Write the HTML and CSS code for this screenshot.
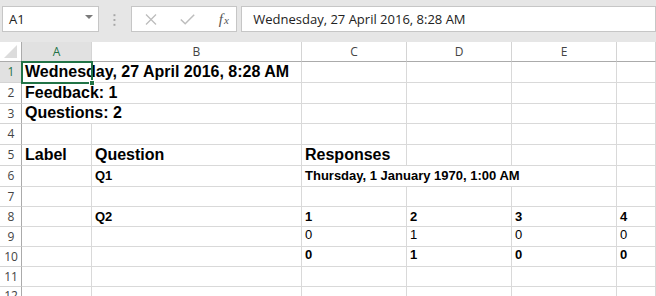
FILE: index.html
```html
<!DOCTYPE html>
<html>
<head>
<meta charset="utf-8">
<link rel="stylesheet" href="styles.css">
</head>
<body>
<div class="app">
  <div class="toolbar">
    <div class="namebox">
      <span class="nb-text">A1</span>
      <svg class="nb-caret" width="8" height="5" viewBox="0 0 8 5"><polygon points="0,0 8,0 4,4" fill="#7a7a7a"/></svg>
    </div>
    <svg class="dots" width="3" height="12" viewBox="0 0 3 12"><rect x="0.5" y="0" width="2" height="2" fill="#a6a6a6"/><rect x="0.5" y="5" width="2" height="2" fill="#a6a6a6"/><rect x="0.5" y="10" width="2" height="2" fill="#a6a6a6"/></svg>
    <div class="fxbox">
      <svg class="ic-x" width="12" height="11" viewBox="0 0 12 11"><path d="M1 0.5 L11 10.5 M11 0.5 L1 10.5" stroke="#bdbdbd" stroke-width="1.3" fill="none"/></svg>
      <svg class="ic-ok" width="15" height="11" viewBox="0 0 15 11"><path d="M0.8 5.5 L5.2 9.8 L14.2 0.8" stroke="#bdbdbd" stroke-width="1.5" fill="none"/></svg>
      <span class="ic-fx"><span class="fx-f">f</span><span class="fx-x">x</span></span>
    </div>
    <div class="formula">Wednesday, 27 April 2016, 8:28 AM</div>
  </div>

  <div class="sheet">
    <!-- header row -->
    <div class="corner"><svg width="21" height="19" viewBox="0 0 21 19"><polygon points="17,3 17,16 4,16" fill="#dcdcdc"/></svg></div>
    <div class="ch ch-sel">A</div>
    <div class="ch">B</div>
    <div class="ch">C</div>
    <div class="ch">D</div>
    <div class="ch">E</div>
    <div class="ch"></div>

    <!-- row 1 -->
    <div class="rh rh-sel">1</div>
    <div class="c big span2 a1">Wednesday, 27 April 2016, 8:28 AM<div class="sel"><div class="handle"></div></div></div>
    <div class="c"></div><div class="c"></div><div class="c"></div><div class="c"></div>

    <!-- row 2 -->
    <div class="rh">2</div>
    <div class="c big span2">Feedback: 1</div>
    <div class="c"></div><div class="c"></div><div class="c"></div><div class="c"></div>

    <!-- row 3 -->
    <div class="rh">3</div>
    <div class="c big span2">Questions: 2</div>
    <div class="c"></div><div class="c"></div><div class="c"></div><div class="c"></div>

    <!-- row 4 -->
    <div class="rh">4</div>
    <div class="c"></div><div class="c"></div><div class="c"></div><div class="c"></div><div class="c"></div><div class="c"></div>

    <!-- row 5 -->
    <div class="rh">5</div>
    <div class="c big">Label</div>
    <div class="c big">Question</div>
    <div class="c big">Responses</div>
    <div class="c"></div><div class="c"></div><div class="c"></div>

    <!-- row 6 -->
    <div class="rh">6</div>
    <div class="c"></div>
    <div class="c sm b">Q1</div>
    <div class="c sm b span3">Thursday, 1 January 1970, 1:00 AM</div>
    <div class="c"></div>

    <!-- row 7 -->
    <div class="rh">7</div>
    <div class="c"></div><div class="c"></div><div class="c"></div><div class="c"></div><div class="c"></div><div class="c"></div>

    <!-- row 8 -->
    <div class="rh">8</div>
    <div class="c"></div>
    <div class="c sm b r8">Q2</div>
    <div class="c sm b r8">1</div>
    <div class="c sm b r8">2</div>
    <div class="c sm b r8">3</div>
    <div class="c sm b r8">4</div>

    <!-- row 9 -->
    <div class="rh">9</div>
    <div class="c"></div>
    <div class="c"></div>
    <div class="c sm r9">0</div>
    <div class="c sm r9">1</div>
    <div class="c sm r9">0</div>
    <div class="c sm r9">0</div>

    <!-- row 10 -->
    <div class="rh">10</div>
    <div class="c"></div>
    <div class="c"></div>
    <div class="c sm b r9">0</div>
    <div class="c sm b r9">1</div>
    <div class="c sm b r9">0</div>
    <div class="c sm b r9">0</div>

    <!-- row 11 -->
    <div class="rh">11</div>
    <div class="c"></div><div class="c"></div><div class="c"></div><div class="c"></div><div class="c"></div><div class="c"></div>

    <!-- row 12 -->
    <div class="rh">12</div>
    <div class="c"></div><div class="c"></div><div class="c"></div><div class="c"></div><div class="c"></div><div class="c"></div>
  </div>
</div>
</body>
</html>
```
FILE: styles.css
```css
* { box-sizing: border-box; }
html, body { margin: 0; padding: 0; }
body {
  width: 656px;
  height: 296px;
  overflow: hidden;
  background: #ffffff;
  font-family: "Liberation Sans", Arial, sans-serif;
}
.app { width: 656px; height: 296px; overflow: hidden; }

/* ---------- formula bar ---------- */
.toolbar {
  height: 42px;
  background: #e6e6e6;
  display: flex;
  align-items: flex-start;
  padding-top: 6px;
  padding-left: 2px;
  white-space: nowrap;
}
.namebox {
  width: 100px;
  height: 26px;
  background: #fff;
  border: 1px solid #c6c6c6;
  display: flex;
  align-items: center;
  justify-content: space-between;
  padding: 0 5px 1px 6px;
  font-family: "Open Sans", "Noto Sans", sans-serif;
  font-size: 13px;
  color: #222;
}
.nb-caret { margin-top: -3px; }
.dots { margin: 8px 0 0 14px; }
.fxbox {
  margin-left: 15px;
  width: 110px;
  height: 26px;
  background: #fff;
  border: 1px solid #c6c6c6;
  display: flex;
  align-items: center;
  padding-left: 13px;
}
.ic-x { margin-top: 1px; }
.ic-ok { margin-left: 23px; margin-top: 1px; }
.ic-fx {
  margin-left: 24px;
  font-family: "Liberation Serif", "Times New Roman", serif;
  font-style: italic;
  color: #555;
  display: flex;
  align-items: baseline;
  line-height: 1;
}
.fx-f { font-size: 15px; }
.fx-x { font-size: 11px; margin-left: 1px; }
.formula {
  margin-left: 4px;
  width: 430px;
  height: 26px;
  background: #fff;
  border: 1px solid #c6c6c6;
  padding: 3px 0 0 11px;
  font-family: "Open Sans", "Noto Sans", sans-serif;
  font-size: 13px;
  color: #222;
}

/* ---------- grid ---------- */
.sheet {
  display: grid;
  grid-template-columns: 22px 70px 210px 105px 105px 105px 1fr;
  grid-template-rows: 20px 21px 21px 20px 21px 21px 21px 20px 20px 20px 20px 20px 1fr;
  height: 254px;
}
.corner {
  border-right: 1px solid #ababab;
  border-bottom: 1px solid #ababab;
  background: #fff;
}
.corner svg { display: block; }
.ch {
  border-right: 1px solid #d4d4d4;
  border-bottom: 1px solid #ababab;
  background: #fff;
  font-family: "Open Sans", "Noto Sans", sans-serif;
  font-size: 12px;
  color: #444;
  display: flex;
  align-items: center;
  justify-content: center;
  padding-bottom: 1px;
}
.ch-sel { background: #e1e1e1; color: #217346; }
.rh {
  border-right: 1px solid #ababab;
  border-bottom: 1px solid #d4d4d4;
  background: #fff;
  font-family: "Open Sans", "Noto Sans", sans-serif;
  font-size: 12px;
  color: #444;
  display: flex;
  align-items: center;
  justify-content: center;
  padding-bottom: 1px;
  padding-left: 1px;
}
.rh-sel { background: #e1e1e1; color: #217346; }

.c {
  border-right: 1px solid #d9d9d9;
  border-bottom: 1px solid #d9d9d9;
  white-space: nowrap;
  display: flex;
  align-items: flex-end;
  padding-left: 3px;
  color: #000;
  overflow: visible;
}
.span2 { grid-column: span 2; }
.span3 { grid-column: span 3; }
.big {
  font-weight: bold;
  font-size: 16px;
  line-height: 16px;
  padding-bottom: 2px;
}
.sm {
  font-size: 13px;
  line-height: 13px;
  padding-bottom: 4px;
}
.b { font-weight: bold; }
.r8 { padding-bottom: 3px; }
.r9 { padding-bottom: 5px; }

.a1 { position: relative; }
.sel {
  position: absolute;
  left: -1px;
  top: -1px;
  width: 72px;
  height: 23px;
  border: 2px solid #217346;
}
.handle {
  position: absolute;
  left: 66px;
  top: 17px;
  width: 6px;
  height: 6px;
  background: #217346;
  border: 1px solid #fff;
}
```
